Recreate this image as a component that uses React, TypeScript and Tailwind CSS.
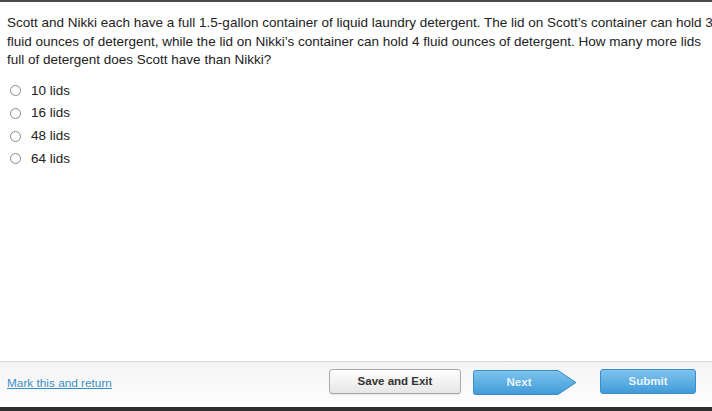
import React, { useState } from 'react';

const options = ['10 lids', '16 lids', '48 lids', '64 lids'];

export default function App() {
  const [selected, setSelected] = useState<number | null>(null);

  return (
    <div
      className="w-[712px] h-[411px] flex flex-col bg-white border-t-2 border-[#4a4a4a] overflow-hidden"
      style={{ fontFamily: '"Liberation Sans", Arial, sans-serif' }}
    >
      {/* Question */}
      <div className="flex-1 pl-[7px] pr-0 pt-[12px]">
        <p className="w-[712px] text-[13.5px] leading-[18.5px] text-[#222]">
          Scott and Nikki each have a full 1.5-gallon container of liquid laundry detergent. The lid on Scott’s container can hold 3
          fluid ounces of detergent, while the lid on Nikki’s container can hold 4 fluid ounces of detergent. How many more lids
          full of detergent does Scott have than Nikki?
        </p>

        <div className="mt-[10px] flex flex-col">
          {options.map((o, i) => (
            <label
              key={o}
              className="flex items-center h-[22.7px] pl-[3px] cursor-pointer"
              onClick={() => setSelected(i)}
            >
              <span className="w-[11px] h-[11px] rounded-full border border-[#8a8a8a] bg-white flex items-center justify-center">
                {selected === i && <span className="w-[5px] h-[5px] rounded-full bg-[#333]" />}
              </span>
              <span className="ml-[10px] text-[13.5px] text-[#222]">{o}</span>
            </label>
          ))}
        </div>
      </div>

      {/* Footer */}
      <div className="h-[46px] border-t border-[#d6d6d6] bg-gradient-to-b from-[#f4f4f4] to-[#fdfdfd] flex items-start pt-[7px] pl-[7px]">
        <div className="w-[322px] h-[25px] flex items-center">
          <a href="#" className="text-[11.8px] text-[#3b8ec4] underline mt-[4px]">
            Mark this and return
          </a>
        </div>

        <button className="w-[132px] h-[25px] rounded-[3px] border border-[#a9a9a9] bg-gradient-to-b from-white to-[#e6e6e6] text-[11.5px] font-bold text-[#333] shadow-[0_1px_0_rgba(0,0,0,0.08)]">
          Save and Exit
        </button>

        <div className="ml-[12px] relative w-[104px] h-[25px] mt-[1px]">
          <svg width="104" height="25" viewBox="0 0 104 25" className="absolute inset-0">
            <defs>
              <linearGradient id="nx" x1="0" y1="0" x2="0" y2="1">
                <stop offset="0" stopColor="#7ec4ee" />
                <stop offset="1" stopColor="#409bd8" />
              </linearGradient>
            </defs>
            <path
              d="M2.5 0.5 H85 L103 12.5 L85 24.5 H2.5 Q0.5 24.5 0.5 22.5 V2.5 Q0.5 0.5 2.5 0.5 Z"
              fill="url(#nx)"
              stroke="#3a8dc8"
            />
          </svg>
          <span className="relative flex items-center justify-center w-[92px] h-full text-[11.5px] font-bold text-[#e8f4fc]">
            Next
          </span>
        </div>

        <button className="ml-[23px] w-[96px] h-[25px] rounded-[3px] border border-[#3a8dc8] bg-gradient-to-b from-[#7ec4ee] to-[#409bd8] text-[11.5px] font-bold text-[#e8f4fc]">
          Submit
        </button>
      </div>

      <div className="h-[4px] bg-[#2e2e2e]" />
    </div>
  );
}
